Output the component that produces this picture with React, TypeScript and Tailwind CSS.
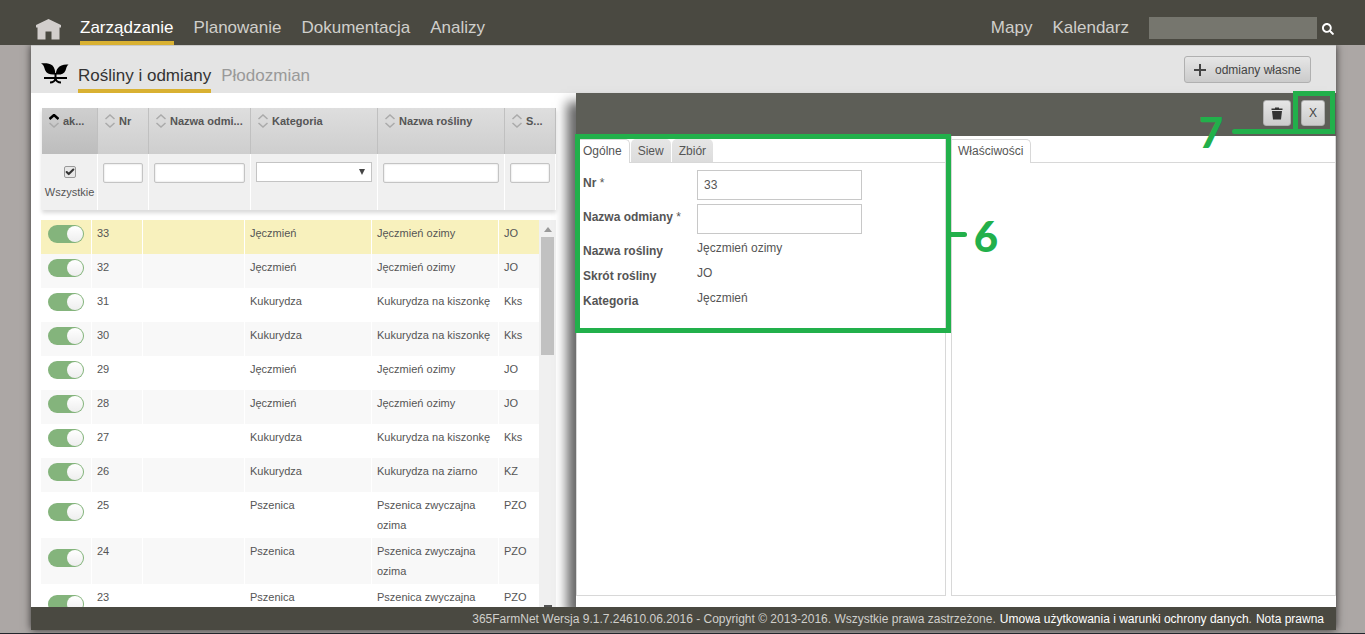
import { useState } from "react";
import { Check } from "lucide-react";
import { FaSearch } from "react-icons/fa";

interface Variety {
  nr: string;
  category: string;
  plant: string;
  short: string;
}

const varieties: Variety[] = [
  { nr: "33", category: "Jęczmień", plant: "Jęczmień ozimy", short: "JO" },
  { nr: "32", category: "Jęczmień", plant: "Jęczmień ozimy", short: "JO" },
  { nr: "31", category: "Kukurydza", plant: "Kukurydza na kiszonkę", short: "Kks" },
  { nr: "30", category: "Kukurydza", plant: "Kukurydza na kiszonkę", short: "Kks" },
  { nr: "29", category: "Jęczmień", plant: "Jęczmień ozimy", short: "JO" },
  { nr: "28", category: "Jęczmień", plant: "Jęczmień ozimy", short: "JO" },
  { nr: "27", category: "Kukurydza", plant: "Kukurydza na kiszonkę", short: "Kks" },
  { nr: "26", category: "Kukurydza", plant: "Kukurydza na ziarno", short: "KZ" },
  { nr: "25", category: "Pszenica", plant: "Pszenica zwyczajna ozima", short: "PZO" },
  { nr: "24", category: "Pszenica", plant: "Pszenica zwyczajna ozima", short: "PZO" },
  { nr: "23", category: "Pszenica", plant: "Pszenica zwyczajna ozima", short: "PZO" },
];

const columns = ["ak...", "Nr", "Nazwa odmi...", "Kategoria", "Nazwa rośliny", "S..."];

const filterInput =
  "block h-5 w-full rounded-xs border border-[#c4c4c4] bg-white px-1 shadow-[inset_0_0_2px_rgba(0,0,0,0.2)]";

const greyButton =
  "flex items-center justify-center rounded-[3px] border border-[#b0b0b0] bg-linear-to-b from-[#e6e6e6] to-[#cbcbcb] text-xs text-[#444]";

const HomeIcon = () => (
  <svg width="26" height="21" viewBox="0 0 26 21" fill="#d2cecc">
    <path d="M12.500 0 L25 6 V8.500 H23.500 V20.500 H15.500 V12.500 H9.500 V20.500 H1.500 V8.500 H0 V6 Z" />
  </svg>
);

const PlantIcon = () => (
  <svg width="28" height="21" viewBox="0 0 28 21">
    <path
      d="M0 0.300 C4 0 9 0 11.500 2.500 C13.800 5 14.300 8 14.300 11.500 C9 12 5.500 10.500 4.300 7.500 C3.300 5 3 2 0 0.300 Z"
      fill="#000"
    />
    <path
      d="M27.500 1.500 C22.500 1 19 2.500 17 5 C15.300 7.200 14.800 9 15 11.500 C19.500 12 23 11 24.500 7.500 C25.300 5.500 25.500 3 27.500 1.500 Z"
      fill="#000"
    />
    <path d="M14.500 10 V17 M3 15 H26" stroke="#000" strokeWidth="2" fill="none" />
    <path d="M9 19.500 Q13.500 19.500 14.500 15.500 Q15.500 19.500 20 19.500" stroke="#000" strokeWidth="1.800" fill="none" />
  </svg>
);

const PlusIcon = () => (
  <svg width="12" height="12" viewBox="0 0 12 12" stroke="#444" strokeWidth="2">
    <path d="M6 0 V12 M0 6 H12" />
  </svg>
);

const TrashIcon = () => (
  <svg width="12" height="13" viewBox="0 0 12 13" fill="#333">
    <path d="M0.500 1.500 H4 V0.500 H8 V1.500 H11.500 V3 H0.500 Z M1 4 H11 L10 12.500 H2 Z" />
  </svg>
);

const SortIcon = ({ active }: { active?: boolean }) => (
  <svg width="10" height="14" viewBox="0 0 10 14" fill="none" strokeWidth="1.500" className="shrink-0">
    <path d="M0.500 5 L5 1 L9.500 5" stroke={active ? "#000" : "#aaa"} strokeWidth={active ? 2.5 : 1.5} />
    <path d="M0.500 9 L5 13 L9.500 9" stroke="#aaa" />
  </svg>
);

const TopBar = () => (
  <header className="relative z-10 flex h-[45px] shrink-0 items-end bg-[#4a4941] pr-[31px] pl-9 text-[17px] leading-5 text-[#d0cfcb]">
    <a href="#" aria-label="Start" className="mr-[18px] pb-[5px]">
      <HomeIcon />
    </a>
    <nav className="flex gap-5">
      <a href="#" className="border-b-4 border-[#d9b132] pb-[3px] text-white">Zarządzanie</a>
      <a href="#" className="border-b-4 border-transparent pb-[3px]">Planowanie</a>
      <a href="#" className="border-b-4 border-transparent pb-[3px]">Dokumentacja</a>
      <a href="#" className="border-b-4 border-transparent pb-[3px]">Analizy</a>
    </nav>
    <nav className="ml-auto flex gap-5 pb-[7px]">
      <a href="#">Mapy</a>
      <a href="#">Kalendarz</a>
    </nav>
    <input type="search" aria-label="Szukaj" className="mb-1.5 ml-5 h-[22px] w-[168px] bg-[#76766e] px-2 text-sm text-white" />
    <button aria-label="Szukaj" className="mb-2.5 ml-[5px] text-white">
      <FaSearch size={12} />
    </button>
  </header>
);

const SubHeader = () => (
  <div className="flex h-12 shrink-0 items-end border-t border-[#c8c8c8] bg-[#e4e4e4] pr-[25px] pl-2.5 text-[17px] leading-5">
    <div className="mr-[9px] pb-[9px]">
      <PlantIcon />
    </div>
    <nav className="flex gap-2.5">
      <a href="#" className="border-b-4 border-[#d9b132] pb-[3px] text-[#333]">Rośliny i odmiany</a>
      <a href="#" className="border-b-4 border-transparent pb-[3px] text-[#999]">Płodozmian</a>
    </nav>
    <button className={`${greyButton} mb-2.5 ml-auto h-[27px] gap-[9px] px-[9px]`}>
      <PlusIcon />
      odmiany własne
    </button>
  </div>
);

const FilterTable = () => (
  <table className="ml-px w-[514px] table-fixed border-separate border-spacing-0 text-[11px] shadow-[0_3px_4px_rgba(0,0,0,0.15)]">
    <colgroup>
      <col className="w-14" />
      <col className="w-[51px]" />
      <col className="w-[102px]" />
      <col className="w-[127px]" />
      <col className="w-[127px]" />
      <col className="w-[51px]" />
    </colgroup>
    <thead>
      <tr>
        {columns.map((name, i) => (
          <th
            key={name}
            className={`h-[46px] border-r border-[#c0c0c0] bg-linear-to-b pt-1.5 pl-[7px] text-left align-top font-bold text-[#555] ${
              i === 0 ? "from-[#cfcfcf] to-[#bdbdbd]" : "from-[#dedede] to-[#cecece]"
            }`}
          >
            <span className="flex items-center gap-1 leading-[14px] whitespace-nowrap">
              <SortIcon active={i === 0} />
              {name}
            </span>
          </th>
        ))}
      </tr>
    </thead>
    <tbody>
      <tr className="h-14 bg-[#f0f0f0] align-top">
        <td className="border-r border-white pt-3">
          <label className="flex flex-col items-center gap-1 leading-5 text-[#555]">
            <span className="grid place-items-center">
              <input
                type="checkbox"
                defaultChecked
                className="col-start-1 row-start-1 size-3 appearance-none rounded-xs border border-[#999] bg-[#e8e8e8]"
              />
              <Check size={10} strokeWidth={5} color="#333" className="pointer-events-none col-start-1 row-start-1" />
            </span>
            Wszystkie
          </label>
        </td>
        <td className="border-r border-white px-[5px] pt-[9px]">
          <input aria-label="Nr" className={filterInput} />
        </td>
        <td className="border-r border-white px-[5px] pt-[9px]">
          <input aria-label="Nazwa odmiany" className={filterInput} />
        </td>
        <td className="border-r border-white px-[5px] pt-2">
          <div className="grid items-center">
            <select
              aria-label="Kategoria"
              className="col-start-1 row-start-1 h-5 w-full appearance-none border border-[#c4c4c4] bg-white px-1"
            >
              <option></option>
              <option>Jęczmień</option>
              <option>Kukurydza</option>
              <option>Pszenica</option>
            </select>
            <span className="pointer-events-none col-start-1 row-start-1 mr-[7px] justify-self-end border-x-[3px] border-t-[6px] border-x-transparent border-t-[#444]" />
          </div>
        </td>
        <td className="border-r border-white px-[5px] pt-[9px]">
          <input aria-label="Nazwa rośliny" className={filterInput} />
        </td>
        <td className="border-r border-white px-[5px] pt-[9px]">
          <input aria-label="Skrót" className={filterInput} />
        </td>
      </tr>
    </tbody>
  </table>
);

const VarietyList = () => {
  const [selected, setSelected] = useState("33");

  return (
    <div className="mt-2.5 flex min-h-0 flex-1 overflow-hidden">
      <div className="w-[498px] overflow-hidden">
        <table className="w-full table-fixed border-separate border-spacing-0 text-[11px] leading-5 text-[#555]">
          <colgroup>
            <col className="w-[51px]" />
            <col className="w-[51px]" />
            <col className="w-[102px]" />
            <col className="w-[127px]" />
            <col className="w-[127px]" />
            <col className="w-10" />
          </colgroup>
          <tbody>
            {varieties.map((v, i) => (
              <tr
                key={v.nr}
                onClick={() => setSelected(v.nr)}
                className={`align-top ${
                  v.nr === selected ? "bg-[#f8f1bd]" : i % 2 ? "bg-[#f8f8f8]" : "bg-white"
                }`}
              >
                <td className="border-r border-white pt-[5px] pb-[11px] pl-[7px] align-middle">
                  <input
                    type="checkbox"
                    role="switch"
                    defaultChecked
                    aria-label={`Aktywna ${v.nr}`}
                    className="flex h-[18px] w-9 appearance-none items-center rounded-full bg-[#c8c8c8] px-px before:size-4 before:rounded-full before:bg-linear-to-b before:from-white before:to-[#eee] checked:justify-end checked:bg-[#84b47c]"
                  />
                </td>
                <td className="border-r border-white px-[5px] py-[3px]">{v.nr}</td>
                <td className="border-r border-white" />
                <td className="border-r border-white px-[5px] py-[3px]">{v.category}</td>
                <td className="border-r border-white px-[5px] py-[3px]">{v.plant}</td>
                <td className="px-[5px] py-[3px]">{v.short}</td>
              </tr>
            ))}
          </tbody>
        </table>
      </div>
      {/* Scrollbar */}
      <div className="flex w-[17px] flex-col items-center bg-[#f0f0f0]">
        <span className="mt-[7px] border-x-4 border-b-[5px] border-x-transparent border-b-[#999]" />
        <span className="mt-[5px] h-[118px] w-[13px] bg-[#c1c1c1]" />
        <span className="mt-auto h-0.5 w-2 bg-[#555]" />
      </div>
    </div>
  );
};

const GeneralForm = () => (
  <form className="grid grid-cols-[114px_165px] gap-y-1 pt-[7px] pl-1.5 text-xs leading-5 text-[#555]">
    <label htmlFor="nr" className="pt-[3px] font-bold">
      Nr <span className="font-normal">*</span>
    </label>
    <input id="nr" defaultValue="33" className="h-[30px] border border-[#c8c8c8] px-1.5" />
    <label htmlFor="name" className="pt-[3px] font-bold">
      Nazwa odmiany <span className="font-normal">*</span>
    </label>
    <input id="name" className="h-[30px] border border-[#c8c8c8] px-1.5" />
    <span className="h-[21px] pt-[3px] font-bold">Nazwa rośliny</span>
    <span className="h-[21px]">Jęczmień ozimy</span>
    <span className="h-[21px] pt-[3px] font-bold">Skrót rośliny</span>
    <span className="h-[21px]">JO</span>
    <span className="h-[21px] pt-[3px] font-bold">Kategoria</span>
    <span className="h-[21px]">Jęczmień</span>
  </form>
);

const activeTab = "-mb-px h-6 rounded-tr-[5px] border-t border-r border-[#d8d8d8] bg-white pr-[7px] pb-0.5 pl-1.5";
const inactiveTab = "h-[23px] rounded-t-[5px] bg-linear-to-b from-[#e6e6e6] to-[#dcdcdc] px-[7px]";

const DetailPanel = () => (
  <section className="relative flex min-w-0 flex-1 flex-col bg-white text-xs text-[#555] shadow-[-9px_9px_11px_rgba(0,0,0,0.6)]">
    <div className="flex h-[43px] shrink-0 items-start justify-end gap-2.5 bg-[#5d5e57] pt-[7px] pr-[11px]">
      <button aria-label="Usuń" className={`${greyButton} h-[26px] w-7`}>
        <TrashIcon />
      </button>
      <div className="relative">
        <button className={`${greyButton} h-[26px] w-6`}>X</button>
        {/* Callout 7 */}
        <div className="pointer-events-none absolute -top-[9px] -right-[10px] h-[43px] w-[42px] border-[5px] border-[#22b04b]" />
        <div className="pointer-events-none absolute top-[29px] right-[27px] h-[5px] w-[66px] rounded-l-full bg-[#22b04b]" />
        <span className="pointer-events-none absolute top-[11px] right-[102px] font-[Lato,sans-serif] text-[42px] leading-[42px] font-black text-[#22b04b]">
          7
        </span>
      </div>
    </div>
    <div className="mb-[11px] flex min-h-0 flex-1 gap-[5px]">
      <div className="relative flex flex-[370] flex-col border-x border-b border-[#d8d8d8]">
        <div className="flex h-[27px] items-end gap-px border-b border-[#d8d8d8]" role="tablist">
          <button role="tab" aria-selected="true" className={activeTab}>
            Ogólne
          </button>
          <button role="tab" aria-selected="false" className={inactiveTab}>
            Siew
          </button>
          <button role="tab" aria-selected="false" className={inactiveTab}>
            Zbiór
          </button>
        </div>
        <GeneralForm />
        {/* Callout 6 */}
        <div className="pointer-events-none absolute -top-0.5 -right-1.5 -left-0.5 h-[199px] border-[5px] border-[#22b04b]" />
        <div className="pointer-events-none absolute top-[96px] -right-[22px] h-[5px] w-[18px] rounded-r-full bg-[#22b04b]" />
        <span className="pointer-events-none absolute top-[79px] -right-[53px] z-10 font-[Lato,sans-serif] text-[42px] leading-[42px] font-black text-[#22b04b]">
          6
        </span>
      </div>
      <div className="flex flex-[385] flex-col border-x border-b border-[#d8d8d8]">
        <div className="flex h-[27px] items-end border-b border-[#d8d8d8]" role="tablist">
          <button role="tab" aria-selected="true" className={activeTab}>
            Właściwości
          </button>
        </div>
      </div>
    </div>
  </section>
);

const App = () => {
  return (
    <div className="flex h-screen flex-col overflow-hidden border-b border-[#22262c] bg-[#aca7a5] font-['Liberation_Sans',Arial,sans-serif]">
      <TopBar />
      <main className="mr-[29px] mb-[3px] ml-[31px] flex min-h-0 flex-1 flex-col bg-white shadow-[0_0_8px_rgba(0,0,0,0.7)]">
        <SubHeader />
        <div className="flex min-h-0 flex-1">
          <section className="flex w-[545px] shrink-0 flex-col pt-[15px] pl-2.5">
            <FilterTable />
            <VarietyList />
          </section>
          <DetailPanel />
        </div>
        <footer className="relative flex h-[23px] shrink-0 items-center justify-end gap-1 bg-[#4a4941] pr-3 text-xs text-[#d0cfcb]">
          <span>365FarmNet Wersja 9.1.7.24610.06.2016 - Copyright © 2013-2016. Wszystkie prawa zastrzeżone.</span>
          <span>
            <a href="#" className="text-white">Umowa użytkowania i warunki ochrony danych</a>.
          </span>
          <a href="#" className="text-white">Nota prawna</a>
        </footer>
      </main>
    </div>
  );
};

export default App;
